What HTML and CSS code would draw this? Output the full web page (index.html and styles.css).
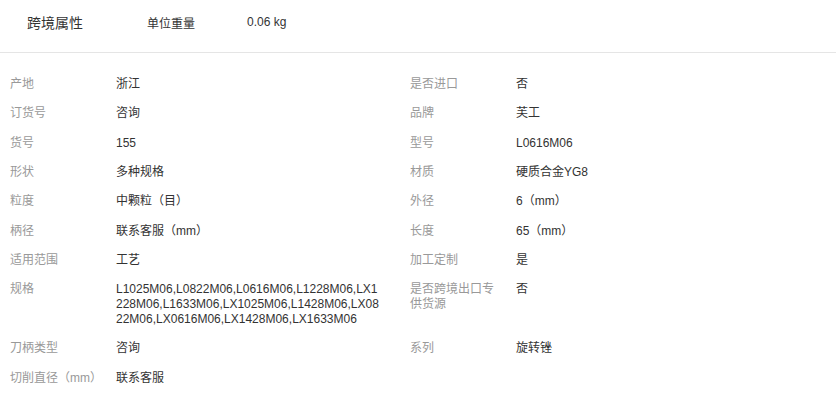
FILE: index.html
```html
<!DOCTYPE html>
<html lang="zh-CN">
<head>
  <meta charset="UTF-8">
  <title>商品属性</title>
  <link rel="stylesheet" href="styles.css">
</head>
<body>
  <div class="cross-border">
    <span class="cb-title">跨境属性</span>
    <span class="cb-name">单位重量</span>
    <span class="cb-value">0.06 kg</span>
  </div>

  <div class="attrs">
    <div class="attr"><span class="label">产地</span><span class="value">浙江</span></div>
    <div class="attr"><span class="label">是否进口</span><span class="value">否</span></div>
    <div class="attr"><span class="label">订货号</span><span class="value">咨询</span></div>
    <div class="attr"><span class="label">品牌</span><span class="value">芙工</span></div>
    <div class="attr"><span class="label">货号</span><span class="value">155</span></div>
    <div class="attr"><span class="label">型号</span><span class="value">L0616M06</span></div>
    <div class="attr"><span class="label">形状</span><span class="value">多种规格</span></div>
    <div class="attr"><span class="label">材质</span><span class="value">硬质合金YG8</span></div>
    <div class="attr"><span class="label">粒度</span><span class="value">中颗粒（目）</span></div>
    <div class="attr"><span class="label">外径</span><span class="value">6（mm）</span></div>
    <div class="attr"><span class="label">柄径</span><span class="value">联系客服（mm）</span></div>
    <div class="attr"><span class="label">长度</span><span class="value">65（mm）</span></div>
    <div class="attr"><span class="label">适用范围</span><span class="value">工艺</span></div>
    <div class="attr"><span class="label">加工定制</span><span class="value">是</span></div>
    <div class="attr"><span class="label">规格</span><span class="value">L1025M06,L0822M06,L0616M06,L1228M06,LX1228M06,L1633M06,LX1025M06,L1428M06,LX0822M06,LX0616M06,LX1428M06,LX1633M06</span></div>
    <div class="attr"><span class="label">是否跨境出口专供货源</span><span class="value">否</span></div>
    <div class="attr"><span class="label">刀柄类型</span><span class="value">咨询</span></div>
    <div class="attr"><span class="label">系列</span><span class="value">旋转锉</span></div>
    <div class="attr"><span class="label">切削直径（mm）</span><span class="value">联系客服</span></div>
  </div>
</body>
</html>
```

FILE: styles.css
```css
body {
  margin: 0;
  background: #fff;
  font-family: "Liberation Sans", Arial, "Noto Sans CJK SC", sans-serif;
  font-size: 12px;
  color: #333;
}

.cross-border {
  display: flex;
  align-items: center;
  height: 44px;
  padding: 0 0 8px 27px;
  border-bottom: 1px solid #e5e5e5;
}
.cb-title {
  width: 120px;
  font-size: 14px;
  color: #333;
}
.cb-name {
  width: 100px;
  color: #333;
}
.cb-value { color: #333; }

.attrs {
  display: grid;
  grid-template-columns: 400px 400px;
  padding: 17px 0 0 10px;
}
.attr {
  display: flex;
  align-items: flex-start;
  padding: 7.15px 0;
  line-height: 15px;
}
.label {
  width: 94px;
  padding-right: 12px;
  flex-shrink: 0;
  color: #999;
}
.value {
  width: 265px;
  color: #333;
  word-break: break-all;
}
```
